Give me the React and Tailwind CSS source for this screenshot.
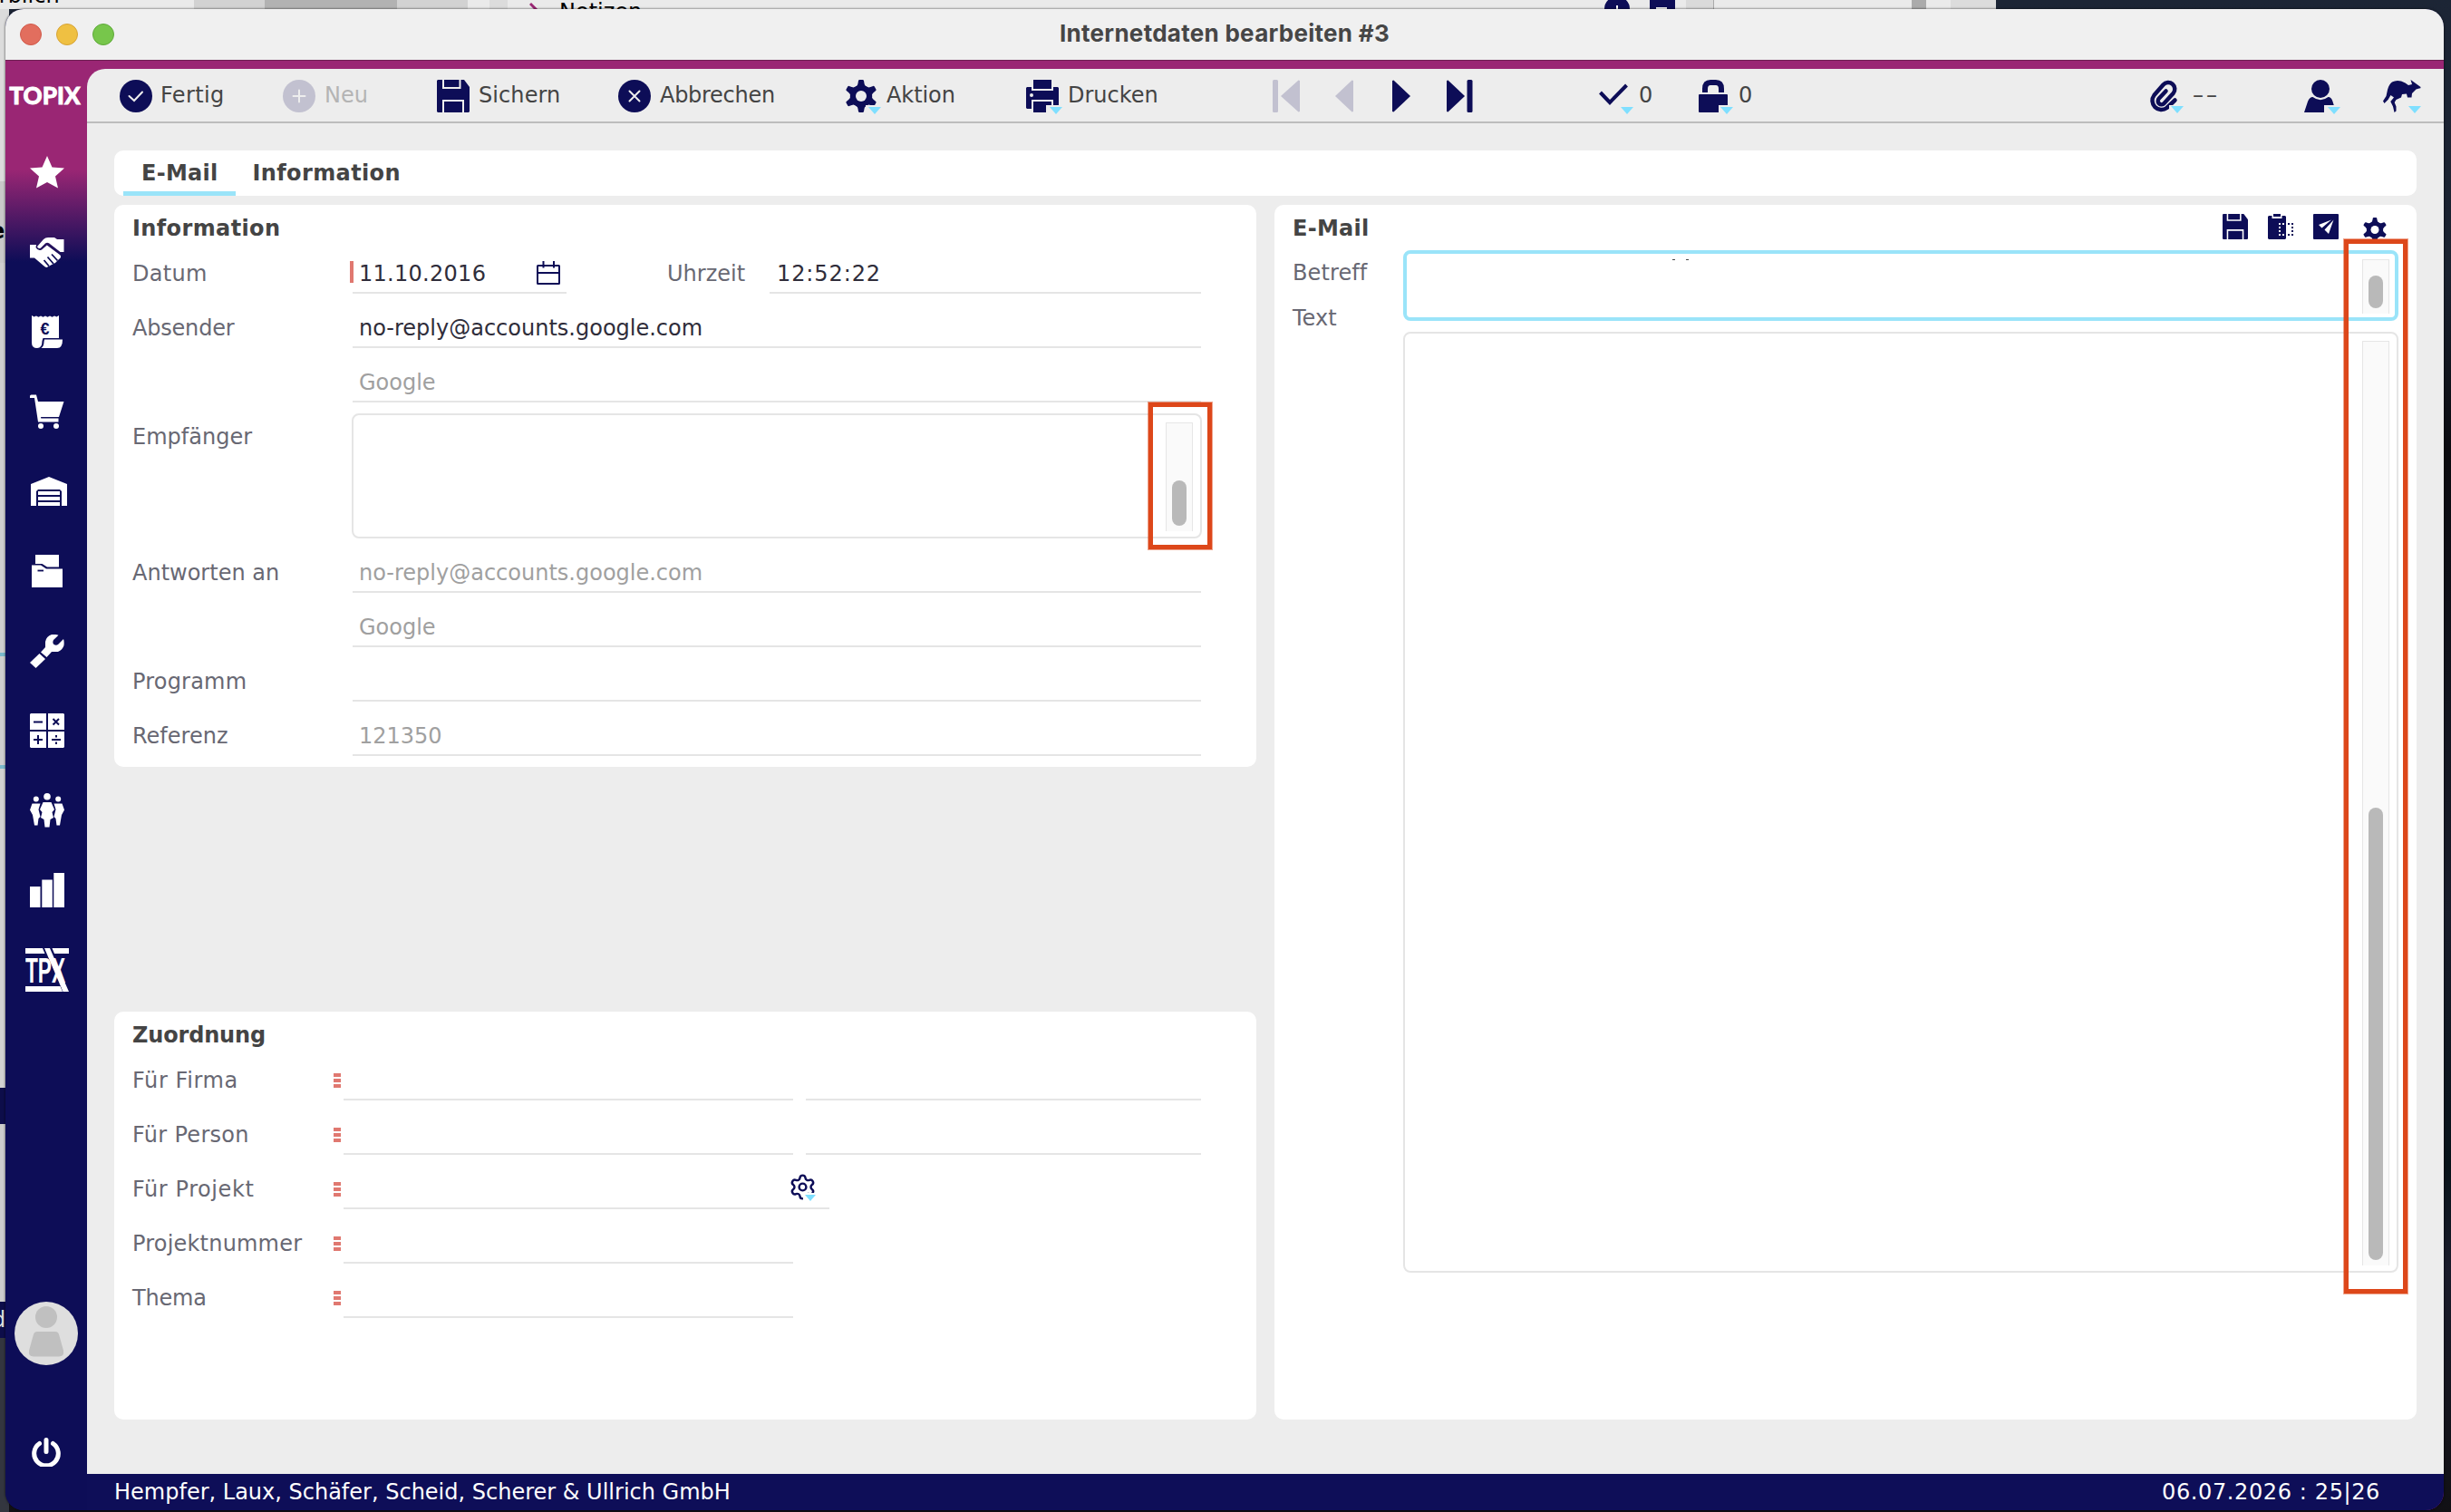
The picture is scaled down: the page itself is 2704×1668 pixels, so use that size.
import { Settings } from 'lucide-react';

const NAVY = '#0d0d57';
const MUTED = '#c2c1d0';

function Caret({ className }) {
  return (
    <svg className={className} width="14" height="8" viewBox="0 0 14 8">
      <path d="M0 0H14L7 8Z" fill="#7fdfff" />
    </svg>
  );
}

/* Icon with the little dropdown triangle in its lower right corner */
function MenuIcon({ children, caret = 'left-[24px] top-[30px]' }) {
  return (
    <span className="relative block h-9">
      {children}
      <span className="absolute left-[22px] top-[28px] h-3 w-4 bg-[#ededed]"></span>
      <Caret className={`absolute ${caret}`} />
    </span>
  );
}

function CircleIcon({ d, color = NAVY }) {
  return (
    <svg width="36" height="36" viewBox="0 0 36 36" fill="none">
      <circle cx="18" cy="18" r="18" fill={color} />
      <path d={d} stroke="#ededed" strokeWidth="2" strokeLinecap="round" />
    </svg>
  );
}

function SaveIcon({ size, line }) {
  return (
    <svg width={size} height={size} viewBox="0 0 36 36" fill="none">
      <path d="M1 0H30L36 8V35L35 36H1L0 35V1Z" fill={NAVY} />
      <path d="M7 0V9H25.5V0M7 36V23H29V36" stroke={line} strokeWidth="2" />
    </svg>
  );
}

function GearIcon({ width, height, hole }) {
  return (
    <svg width={width} height={height} viewBox="0 0 34 36">
      <g fill={NAVY}>
        <circle cx="17" cy="18" r="12.2" />
        {[0, 60, 120, 180, 240, 300].map((angle) => (
          <path key={angle} d="M9.5 8.5Q13 7.5 13.5 4L14 1Q14.3 0 15.3 0H18.7Q19.7 0 20 1L20.5 4Q21 7.5 24.5 8.5L17 18Z" transform={`rotate(${angle} 17 18)`} />
        ))}
      </g>
      <circle cx="17" cy="18" r="6" fill={hole} />
    </svg>
  );
}

function PrinterIcon() {
  return (
    <svg width="36" height="36" viewBox="0 0 36 36" fill={NAVY}>
      <rect x="8" width="20" height="10" />
      <path d="M1 8H6V12H30V8H35L36 9V31L35 32H30V22H6V32H1L0 31V9Z" />
      <rect x="8" y="24" width="20" height="12" />
      <circle cx="6" cy="17" r="2" fill="#ededed" />
    </svg>
  );
}

function LockIcon() {
  return (
    <svg width="32" height="36" viewBox="0 0 32 36" fill="none">
      <path d="M7 14V10Q7 3 13 3H19Q25 3 25 10V14" stroke={NAVY} strokeWidth="6" />
      <rect y="16" width="32" height="20" rx="1" fill={NAVY} />
    </svg>
  );
}

function ClipIcon() {
  return (
    <svg width="32" height="36" viewBox="0 0 32 36" fill="none">
      <path d="M28.500 22.500L19.500 31A10 10 0 0 1 5.500 17L15.500 5.500A7.200 7.200 0 0 1 26.500 15L16.500 26A3.900 3.900 0 0 1 10.700 20.700L18.500 12.500" stroke={NAVY} strokeWidth="4.500" strokeLinecap="round" />
    </svg>
  );
}

function UserIcon() {
  return (
    <svg width="34" height="36" viewBox="0 0 34 36" fill={NAVY}>
      <circle cx="18" cy="10" r="10" />
      <path d="M0 36L4 24Q6 19 9.500 19Q18 25.500 26.500 19Q30 19 31.500 24L34 32V36Z" />
    </svg>
  );
}

function KangarooIcon() {
  return (
    <svg width="42" height="36" viewBox="0 0 42 36" fill={NAVY}>
      <path d="M30.500 0L36 4L41.500 8Q42 9.500 40 9.500L36.500 10.500L32 15L31.500 19.500H27L26 15.500L21 16L20 19.500L14.500 22L12.700 25L14.500 29.500V34.500L12.500 36L11 29.500L8.300 24L12 19.500L8.500 17L5.500 22L1.500 26L0 23.500L3.500 18L5 11Q6.500 5 10 2.500Q14.500 0 20 1.500Q25 3 28 6L32 5Z" />
    </svg>
  );
}

function ClipboardIcon() {
  return (
    <svg width="28" height="28" viewBox="0 0 28 28" fill="none" strokeWidth="2">
      <path d="M1 2H4.500V5H15.500V2H19L20 3V27L19 28H1L0 27V3Z" fill={NAVY} />
      <rect x="6" width="8" height="3" fill={NAVY} />
      <path d="M13 10V24" stroke="#fff" strokeDasharray="2 2" />
      <path d="M16 11H18M16 23H18" stroke="#fff" />
      <path d="M27 10V24" stroke={NAVY} strokeDasharray="2 2" />
      <path d="M22 11H24M22 23H24" stroke={NAVY} />
    </svg>
  );
}

function SendIcon() {
  return (
    <svg width="28" height="28" viewBox="0 0 28 28">
      <rect width="28" height="28" rx="1" fill={NAVY} />
      <path d="M20 6.500L6 12L9.500 15.500ZM22.500 6.500L12.500 17.500L17 22Z" fill="#fff" />
    </svg>
  );
}

function CalendarIcon() {
  return (
    <svg width="26" height="26" viewBox="0 0 26 26" fill="none" stroke={NAVY} strokeWidth="2">
      <rect x="1" y="5" width="24" height="20" rx="0.500" />
      <path d="M1 13H25M7.500 0V7.500M19 0V7.500" />
    </svg>
  );
}

const sideIcons = [
  <svg key="star" width="38" height="36" viewBox="0 0 38 36" fill="#fff">
    <path d="M19 0L24.500 12.500L38 13.500L28 22.500L31 35.500L19 29L7 35.500L10 22.500L0 13.500L13.500 12.500Z" />
  </svg>,
  <svg key="hands" width="38" height="33" viewBox="0 0 38 33" fill="#fff">
    <path d="M8 10L15 2Q17 0 20 0H27L30 2H37.500V16H33.500L21 6.300Q19 5 17 6.500L12 11.500Q9 13 8 10Z" />
    <path d="M0 8H7L6.500 11Q9 15.500 13 13.500L18.800 8.500L33.500 19.500Q35 22 32 24L28 28L24 30L18.500 33Q17 33 15 31L5 22.500H0Z" />
    <path d="M15.500 25L21 31.500M19.500 21.500L26 29M24 18.500L30.500 25.500" stroke={NAVY} strokeWidth="1.800" />
  </svg>,
  <svg key="receipt" width="34" height="36" viewBox="0 0 34 36" fill="#fff">
    <path d="M0 0L2.500 1.500L5 .5L7.500 1.800L10 .5L12.500 1.800L15 .5L17.500 1.800L20 .5L22.500 1.800L25 .5L27.500 1.500L30 0V25H12.500L11.500 28Q11.500 36 6 36Q0 36 0 30Z" />
    <path d="M14 26.500H34Q34 36 28 36H10.500Q13.500 34 13.500 29Z" />
    <text x="9.500" y="20.500" fontSize="18" fontWeight="700" fontFamily="Liberation Sans, sans-serif" fill={NAVY}>€</text>
  </svg>,
  <svg key="cart" width="38" height="38" viewBox="0 0 38 38" fill="#fff">
    <path d="M0 2Q0 .5 1.500 .5H7L9 8H37.500L32 25H12L12.300 26.500H31.500V30.500H9L5 4H0Z" />
    <circle cx="12" cy="35" r="3" />
    <circle cx="29" cy="35" r="3" />
  </svg>,
  <svg key="warehouse" className="ml-1" width="40" height="32" viewBox="0 0 40 32" fill="#fff">
    <path d="M0 8L20 0L40 8V32H34V16L32 14H8L6 16V32H0Z" />
    <path d="M8 16H32V20H8ZM8 22H32V26H8ZM8 28H32V32H8Z" />
  </svg>,
  <svg key="folder" width="34" height="36" viewBox="0 0 34 36" fill="#fff">
    <path d="M4 0H30V13.500H17L11.500 10H4Z" />
    <path d="M0 11.500H10L16 15.500H34V36H0Z" />
    <path d="M6.500 17.500H13" stroke={NAVY} strokeWidth="1.800" />
  </svg>,
  <svg key="wrench" width="38" height="37" viewBox="0 0 38 37" fill="#fff">
    <path d="M0 31L10.500 21L17 27L6.500 37Z" />
    <path d="M12 19.500L17 14V8Q18 2 24 0Q28 -.5 31.500 .8L26 6Q24.500 9 26.500 11Q29 12.500 31 11L37 5Q38 7 37.500 12Q36 17 31 19H24L18.500 25Z" />
  </svg>,
  <svg key="calc" width="38" height="38" viewBox="0 0 38 38">
    <path d="M0 1L1 0H18V18H0ZM20 0H37L38 1V18H20ZM0 20H18V38H1L0 37ZM20 20H38V37L37 38H20Z" fill="#fff" />
    <path d="M4 9.500H14M25.500 6L32 12.500M32 6L25.500 12.500M4 29H14M9 24V34M24 29H34M29 24V26.500M29 31.500V34" stroke={NAVY} strokeWidth="2" />
  </svg>,
  <svg key="people" width="38" height="38" viewBox="0 0 38 38" fill="#fff">
    <circle cx="19" cy="3.800" r="3.800" />
    <circle cx="6.800" cy="6.500" r="3" />
    <circle cx="31.200" cy="6.500" r="3" />
    <path d="M14.500 10H23.500L27 18L24.500 21L26 27L22.500 29L21.500 37.500H16.500L15.500 29L12 27L13.500 21L11 18Z" />
    <path d="M2.500 11.500H11.500L9.500 18L11.500 26L9.500 28L8.500 35.500H5L3 24L0 18.500Z" />
    <path d="M35.500 11.500H26.500L28.500 18L26.500 26L28.500 28L29.500 35.500H33L35 24L38 18.500Z" />
  </svg>,
  <svg key="bars" width="38" height="38" viewBox="0 0 38 38" fill="#fff">
    <path d="M0 15H11.500V38H0ZM13.300 7.500H24.800V38H13.300ZM26.300 0H38V38H26.300Z" />
  </svg>,
  <svg key="tpx" width="48" height="48" viewBox="0 0 48 48" fill="#fff">
    <path d="M0 0H19L21.500 6H0ZM29.500 0H48V6H32ZM0 42H38.500L41 48H0Z" />
    <text x="0" y="37.500" fontSize="38" fontWeight="700" fontFamily="Liberation Sans, sans-serif" textLength="44" lengthAdjust="spacingAndGlyphs">TPX</text>
    <path d="M21 0H27L48 48H41.500Z" />
  </svg>,
];

function Sidebar() {
  return (
    <aside className="flex w-[90px] flex-col items-center bg-[linear-gradient(to_bottom,#9a2674_0px,#9a2674_120px,#0d0d57_222px)]">
      <div className="mt-[22px] mr-[3px] h-[57px] font-[Lato] text-[26px] leading-[32px] font-black tracking-[0.1px] text-white [-webkit-text-stroke:0.8px_white]">TOPIX</div>
      {sideIcons.map((icon) => (
        <div key={icon.key} className="flex h-[88px] w-full items-center justify-center pl-[2px]">
          {icon}
        </div>
      ))}
      <svg className="mt-[322px]" width="70" height="70" viewBox="0 0 70 70">
        <circle cx="35" cy="35" r="35" fill="#dedede" />
        <circle cx="35" cy="17" r="12" fill="#c0c0c0" />
        <path d="M25 33H45Q48 33 49 36L54 54Q55 60.500 49 60.500H21Q15 60.500 16 54L21 36Q22 33 25 33Z" fill="#c0c0c0" />
      </svg>
      <svg className="mt-[80px]" width="32" height="32" viewBox="0 0 32 32" fill="none" stroke="#fff" strokeWidth="5" strokeLinecap="round">
        <path d="M8.500 6.500A13.300 13.300 0 1 0 23.500 6.500M16 2.500V15.500" />
      </svg>
    </aside>
  );
}

function ToolItem({ icon, label, className, labelClass = '' }) {
  return (
    <div className={`flex items-center ${className}`}>
      {icon}
      <span className={`pb-[3px] whitespace-nowrap ${labelClass}`}>{label}</span>
    </div>
  );
}

function Toolbar() {
  return (
    <div className="flex h-[60px] items-center border-b-2 border-[#bdbdbd] pt-[2px] pl-[36px] text-[#444] leading-none">
      <ToolItem className="w-[180px]" icon={<CircleIcon d="M10.500 18L16 23L25 13.500" />} label="Fertig" labelClass="ml-[9px] tracking-[0.36px]" />
      <ToolItem className="w-[170px] text-[#b4b4b4]" icon={<CircleIcon d="M11.500 18H24.500M18 11.500V24.500" color={MUTED} />} label="Neu" labelClass="ml-[10px]" />
      <ToolItem className="w-[200px]" icon={<SaveIcon size={36} line="#ededed" />} label="Sichern" labelClass="ml-[10px] tracking-[0.08px]" />
      <ToolItem className="w-[251px]" icon={<CircleIcon d="M12.500 12.500L23.500 23.500M23.500 12.500L12.500 23.500" />} label="Abbrechen" labelClass="ml-[10px] tracking-[-0.28px]" />
      <ToolItem className="w-[199px]" icon={<MenuIcon caret="left-[25px] top-[30px]"><GearIcon width={34} height={36} hole="#ededed" /></MenuIcon>} label="Aktion" labelClass="ml-[11px] tracking-[-0.08px]" />
      <ToolItem className="w-[272px]" icon={<MenuIcon caret="left-[26px] top-[30px]"><PrinterIcon /></MenuIcon>} label="Drucken" labelClass="ml-[10px]" />

      <svg className="mr-[39px]" width="30" height="36" fill={MUTED}>
        <rect width="6" height="36" rx="1.500" />
        <path d="M9 18L28.500 .5L30 1V35L28.500 35.500Z" />
      </svg>
      <svg className="mr-[43px]" width="20" height="36" fill={MUTED}>
        <path d="M0 18L18.500 .5L20 1V35L18.500 35.500Z" />
      </svg>
      <svg className="mr-[40px]" width="20" height="36" fill={NAVY}>
        <path d="M20 18L1.500 .5L0 1V35L1.500 35.500Z" />
      </svg>
      <svg className="mr-[139px]" width="29" height="36" fill={NAVY}>
        <path d="M20 18L1.500 .5L0 1V35L1.500 35.500Z" />
        <rect x="22.500" width="6" height="36" rx="1.500" />
      </svg>

      <ToolItem
        className="w-[110px]"
        icon={
          <MenuIcon>
            <svg width="34" height="36" fill="none" stroke={NAVY} strokeWidth="4">
              <path d="M1.500 14L12 25L30.500 6" />
            </svg>
          </MenuIcon>
        }
        label="0"
        labelClass="ml-[10px]"
      />
      <ToolItem className="w-[497px]" icon={<MenuIcon><LockIcon /></MenuIcon>} label="0" labelClass="ml-[12px]" />
      <ToolItem className="w-[171px]" icon={<MenuIcon caret="left-[24px] top-[29px]"><ClipIcon /></MenuIcon>} label="––" labelClass="ml-[16px] tracking-[3px]" />
      <ToolItem className="w-[87px]" icon={<MenuIcon caret="left-[26px] top-[30px]"><UserIcon /></MenuIcon>} />
      <span className="relative block h-9">
        <KangarooIcon />
        <Caret className="absolute top-[29px] left-[28px]" />
      </span>
    </div>
  );
}

function Label({ children, className = '' }) {
  return <div className={`flex h-[60px] shrink-0 items-center pt-[18px] pb-[2px] leading-none whitespace-nowrap text-[#686873] ${className}`}>{children}</div>;
}

function Field({ children, className = 'pl-[7px]' }) {
  return <div className={`flex h-[60px] items-center border-b-2 border-[#e5e5e5] pt-[18px] leading-none ${className}`}>{children}</div>;
}

function ScrollTrack({ className, thumb }) {
  return (
    <div className={`flex w-[30px] flex-col items-center justify-end border-x border-t border-[#e6e6e6] bg-[#fafafa] pb-[6px] ${className}`}>
      <div className={`w-[16px] rounded-full bg-[#b9b9b9] ${thumb}`}></div>
    </div>
  );
}

function CardTitle({ children, className = '' }) {
  return <h2 className={`h-[38px] pt-[14px] leading-[25px] font-bold text-[#444] ${className}`}>{children}</h2>;
}

function InfoCard() {
  return (
    <section className="h-[620px] rounded-[10px] bg-white pr-[61px] pl-[20px]">
      <CardTitle className="tracking-[0.38px]">Information</CardTitle>
      <div className="flex">
        <Label className="w-[240px] tracking-[0.3px]">Datum</Label>
        <div className="mt-6 h-6 w-1 bg-[#e07870]"></div>
        <Field className="-ml-px w-[236px] pl-[7px] text-[#2f2d3a]">
          <span className="w-[196px] tracking-[0.28px]">11.10.2016</span>
          <span className="-mt-0.5"><CalendarIcon /></span>
        </Field>
        <Label className="ml-[111px] w-[113px]">Uhrzeit</Label>
        <Field className="flex-1 pl-[8px] tracking-[0.9px] text-[#2f2d3a]">12:52:22</Field>
      </div>
      <div className="flex">
        <Label className="w-[243px] tracking-[-0.2px]">Absender</Label>
        <Field className="flex-1 pl-[7px] text-[#2f2d3a]">no-reply@accounts.google.com</Field>
      </div>
      <div className="flex pl-[243px]">
        <Field className="flex-1 pl-[7px] text-[#a0a0a0]">Google</Field>
      </div>
      <div className="flex h-[150px]">
        <Label className="w-[242px]">Empfänger</Label>
        <div className="mt-3 -mr-px flex h-[138px] flex-1 justify-end rounded-[8px] border-2 border-[#e5e5e5] p-2">
          <ScrollTrack className="h-[120px]" thumb="h-[50px]" />
        </div>
      </div>
      <div className="flex">
        <Label className="w-[243px]">Antworten an</Label>
        <Field className="flex-1 pl-[7px] text-[#a0a0a0]">no-reply@accounts.google.com</Field>
      </div>
      <div className="flex pl-[243px]">
        <Field className="flex-1 pl-[7px] text-[#a0a0a0]">Google</Field>
      </div>
      <div className="flex">
        <Label className="w-[243px] tracking-[0.2px]">Programm</Label>
        <Field className="flex-1"></Field>
      </div>
      <div className="flex">
        <Label className="w-[243px]">Referenz</Label>
        <Field className="flex-1 pl-[7px] text-[#a0a0a0]">121350</Field>
      </div>
    </section>
  );
}

const assignments = [
  { label: 'Für Firma', labelClass: 'tracking-[0.6px]', second: true },
  { label: 'Für Person', labelClass: 'tracking-[0.3px]', second: true },
  { label: 'Für Projekt', labelClass: 'tracking-[0.58px]', gear: true },
  { label: 'Projektnummer', labelClass: 'tracking-[0.2px]' },
  { label: 'Thema', labelClass: 'tracking-[-0.2px]' },
];

function AssignmentCard() {
  return (
    <section className="h-[450px] rounded-[10px] bg-white pr-[61px] pl-[20px]">
      <CardTitle className="tracking-[-0.16px]">Zuordnung</CardTitle>
      {assignments.map((row) => (
        <div key={row.label} className="flex">
          <Label className={`w-[222px] ${row.labelClass}`}>{row.label}</Label>
          <div className="mt-[30px] mr-[3px] flex w-2 flex-col gap-0.5">
            <span className="h-1 bg-[#e07870]"></span>
            <span className="h-1 bg-[#e07870]"></span>
            <span className="h-1 bg-[#e07870]"></span>
          </div>
          <Field className={row.gear ? 'w-[536px] justify-end pr-[13px]' : 'w-[496px]'}>
            {row.gear && (
              <span className="relative -mt-[6px] mr-px block">
                <Settings size={31} color={NAVY} strokeWidth={1.9} />
                <span className="absolute top-[22px] left-[16px] h-2 w-4 bg-white"></span>
                <svg className="absolute top-[24px] left-[18px]" width="12" height="7">
                  <path d="M0 0H12L6 7Z" fill="#7fdfff" />
                </svg>
              </span>
            )}
          </Field>
          {row.second && <Field className="ml-[14px] flex-1"></Field>}
        </div>
      ))}
    </section>
  );
}

function MailCard() {
  return (
    <section className="w-[1260px] rounded-[10px] bg-white pr-[20px] pl-[20px]">
      <div className="flex h-[38px] justify-between">
        <CardTitle className="tracking-[0.27px]">E-Mail</CardTitle>
        <div className="flex items-start pt-[10px] pr-[13px]">
          <SaveIcon size={28} line="#fff" />
          <span className="ml-[22px]"><ClipboardIcon /></span>
          <span className="ml-[22px]"><SendIcon /></span>
          <span className="mt-1 ml-[27px]"><GearIcon width={26} height={27} hole="#fff" /></span>
        </div>
      </div>
      <div className="flex pt-3">
        <div className="w-[122px] leading-[50px] text-[#686873]">
          <div className="tracking-[0.1px]">Betreff</div>
          <div>Text</div>
        </div>
        <div className="flex flex-1 flex-col gap-3">
          <div className="flex h-[78px] justify-between rounded-[8px] border-4 border-[#9ae4f9] p-[6px]">
            <div className="ml-[287px] flex gap-[12px]">
              <span className="h-px w-[3px] bg-[#444]"></span>
              <span className="h-px w-[3px] bg-[#444]"></span>
            </div>
            <ScrollTrack className="h-[60px]" thumb="h-[36px]" />
          </div>
          <div className="flex h-[1038px] justify-end rounded-[8px] border-2 border-[#e5e5e5] p-2">
            <ScrollTrack className="h-[1020px]" thumb="h-[499px]" />
          </div>
        </div>
      </div>
    </section>
  );
}

/* Slices of the windows and the wallpaper that show behind the main window */
function Desktop() {
  return (
    <div className="absolute inset-0 bg-[linear-gradient(to_bottom,#1c2535_0%,#1a2230_18%,#0b0b10_30%,#191d2b_60%,#08131a_77%,#1a1c2b_84%,#111014_100%)]">
      <div className="flex h-[10px] w-[2202px] overflow-hidden bg-[#eaeaea]">
        <div className="w-[214px] text-black"><div className="-mt-[19px] -ml-[16px] leading-7">erblich</div></div>
        <div className="flex w-[302px] justify-center bg-[#d2d2d2]"><div className="w-[146px] bg-[#b2b2b2]"></div></div>
        <div className="ml-[24px] w-[20px] bg-[#dcdcdc]"></div>
        <svg className="ml-[24px]" width="12" height="10"><path d="M1 4L8 11" stroke="#9a2674" strokeWidth="3" /></svg>
        <div className="ml-[21px] w-[100px] leading-[26px] text-black">Notizen</div>
        <svg className="ml-[1052px]" width="80" height="10">
          <path d="M1 10A14 14 0 0 1 29 10ZM51 0H79V10H51Z" fill={NAVY} />
          <path d="M15 6V10M58 9H70" stroke="#fff" strokeWidth="2" />
        </svg>
        <div className="ml-[11px] w-[31px] border-r border-[#aaa] bg-[#dadada]"></div>
        <div className="ml-[218px] w-[16px] bg-[#ababab]"></div>
        <div className="ml-[27px] flex-1 bg-[#dcdcdc]"></div>
      </div>
      <div className="flex h-[1658px] w-[10px] flex-col overflow-hidden bg-[#33363f]">
        <div className="h-[190px] bg-[#dcdcdc]"></div>
        <div className="h-[90px] bg-[#c9c9c9] leading-[110px] font-bold text-black"><span className="-ml-[11px]">e</span></div>
        <div className="h-[430px] bg-[#cfcfcf]"></div>
        <div className="h-1 bg-[#7ab9cc]"></div>
        <div className="h-[120px] bg-[#cfcfcf]"></div>
        <div className="h-1 bg-[#7ab9cc]"></div>
        <div className="h-[352px] bg-[#d2d2d2]"></div>
        <div className="h-[40px] bg-[#0d0d4a]"></div>
        <div className="h-[196px] bg-[#cdcdcd]"></div>
        <div className="h-[40px] bg-[#0d0d4a] leading-[40px] text-[#ddd]"><span className="-ml-[9px]">d</span></div>
      </div>
    </div>
  );
}

export default function App() {
  return (
    <div className="relative h-[1668px] w-[2704px] overflow-hidden font-['DejaVu_Sans',sans-serif] text-[24px]">
      <Desktop />

      <div className="absolute top-[10px] left-[6px] flex h-[1656px] w-[2690px] flex-col overflow-hidden rounded-[20px] bg-[#0e0e58] shadow-[0_0_2px_1px_rgba(0,0,0,0.35)]">
        <header className="relative flex h-[56px] shrink-0 items-center gap-[16px] bg-[#f0f0f0] pl-[16px]">
          <span className="size-[24px] rounded-full border border-[#d05a4b] bg-[#e26e5e]"></span>
          <span className="size-[24px] rounded-full border border-[#d6a336] bg-[#efc042]"></span>
          <span className="size-[24px] rounded-full border border-[#5fa93b] bg-[#77c64b]"></span>
          <h1 className="absolute inset-x-0 top-[14px] text-center font-[Inter] text-[26px] leading-none font-bold tracking-[0.28px] text-[#464646]">
            Internetdaten bearbeiten #3
          </h1>
        </header>

        <div className="flex flex-1 border-t border-[#6d1f52]">
          <Sidebar />
          <div className="flex flex-1 flex-col bg-[#9a2674] pt-[9px]">
            <div className="flex flex-1 flex-col rounded-tl-[20px] bg-[#ededed]">
              <Toolbar />
              <main className="flex flex-1 flex-col gap-[10px] px-[30px] pt-[30px] pb-[60px]">
                <nav className="flex h-[50px] rounded-[10px] bg-white pl-[10px] leading-[50px] font-bold text-[#444]">
                  <div className="w-[124px] border-b-[5px] border-[#9ae4f9] pl-[20px] tracking-[0.27px]">E-Mail</div>
                  <div className="ml-[18.500px] tracking-[0.38px]">Information</div>
                </nav>
                <div className="flex flex-1 gap-[20px]">
                  <div className="flex w-[1260px] flex-col justify-between">
                    <InfoCard />
                    <AssignmentCard />
                  </div>
                  <MailCard />
                </div>
              </main>
            </div>
            <footer className="flex h-[40px] justify-between bg-[#0e0e58] pr-[70px] pl-[30px] leading-[41px] text-white">
              <span>Hempfer, Laux, Schäfer, Scheid, Scherer &amp; Ullrich GmbH</span>
              <span className="tracking-[0.61px]">06.07.2026 : 25|26</span>
            </footer>
          </div>
        </div>
      </div>

      {/* Markers around the scroll bars */}
      <div className="absolute top-[444px] left-[1267px] h-[162px] w-[70px] border-[5px] border-[#dd471a] outline-1 outline-[#dd471a]/50"></div>
      <div className="absolute top-[264px] left-[2586px] h-[1163px] w-[70px] border-[5px] border-[#dd471a] outline-1 outline-[#dd471a]/50"></div>
    </div>
  );
}
